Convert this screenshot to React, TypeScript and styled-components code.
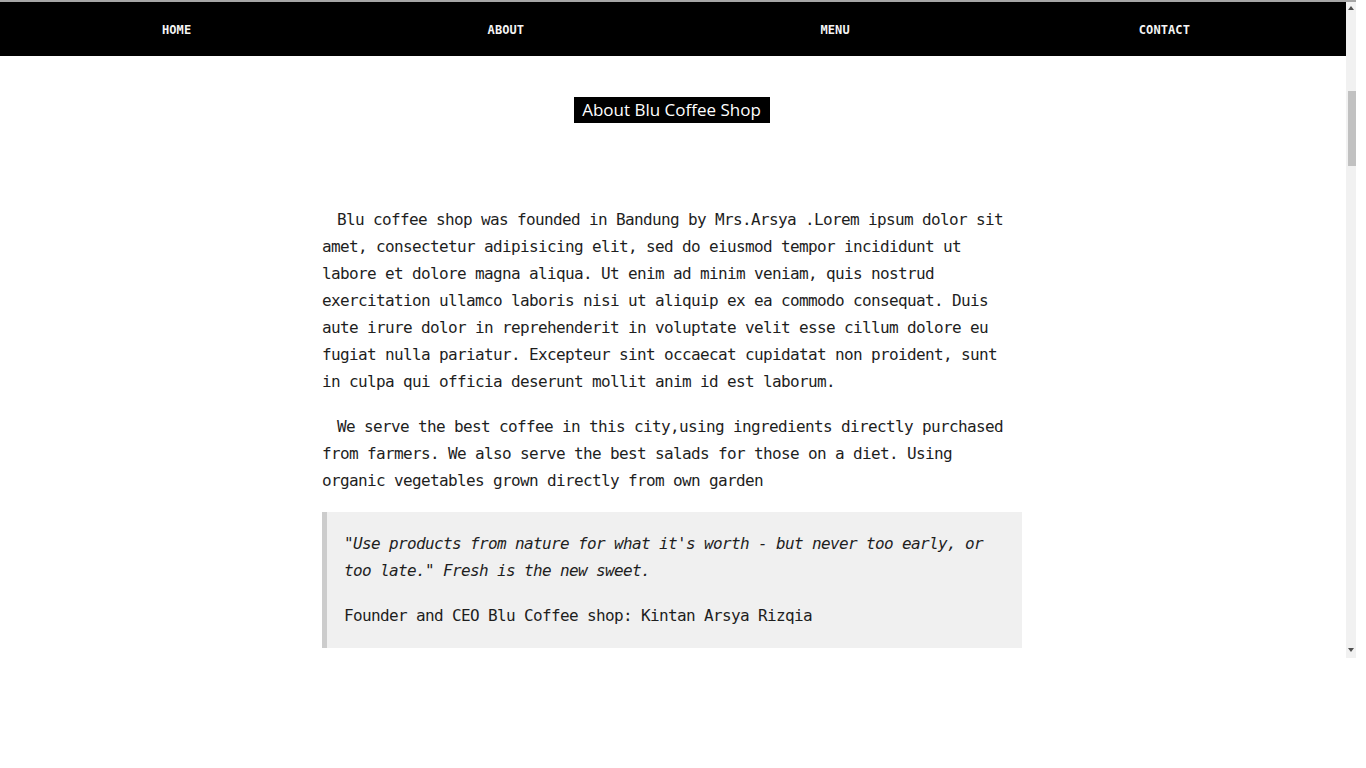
import React from "react";
import styled, { createGlobalStyle } from "styled-components";

const Global = createGlobalStyle`
  html, body { margin: 0; padding: 0; background: #fff; }
  body { font-family: "DejaVu Sans Mono", monospace; }
`;

const Frame = styled.div`
  display: flex;
  width: 1356px;
  height: 658px;
  border-top: 2px solid #a6a6a6;
  box-sizing: border-box;
`;

const Viewport = styled.div`
  width: 1346px;
  flex: none;
  overflow: hidden;
  background: #fff;
`;

const Track = styled.div`
  width: 10px;
  flex: none;
  background: #f1f1f1;
  display: flex;
  flex-direction: column;
  align-items: center;
`;

const Arrow = styled.div<{ $down?: boolean }>`
  width: 0;
  height: 0;
  margin-top: ${(p) => (p.$down ? "auto" : "4px")};
  margin-bottom: ${(p) => (p.$down ? "6px" : "0")};
  border-left: 3px solid transparent;
  border-right: 3px solid transparent;
  ${(p) =>
    p.$down
      ? "border-top: 4px solid #505050;"
      : "border-bottom: 4px solid #505050;"}
`;

const Thumb = styled.div`
  width: 8px;
  height: 75px;
  margin-top: 81px;
  margin-left: 2px;
  background: #c1c1c1;
`;

const Nav = styled.nav`
  background: #000;
  height: 54px;
  display: grid;
  grid-template-columns: repeat(4, 1fr);
  align-items: center;
  padding: 0 17px 0 12px;
  box-sizing: border-box;
`;

const NavLink = styled.a`
  color: #f4f4f4;
  text-align: center;
  font-family: "DejaVu Sans Mono", monospace;
  font-weight: bold;
  font-size: 12px;
  letter-spacing: 0.1px;
  text-decoration: none;
  padding-top: 2px;
`;

const Main = styled.main`
  width: 700px;
  margin: 0 auto;
  padding-top: 42px;
  transform: translateX(-1px);
`;

const TitleRow = styled.div`
  display: flex;
  justify-content: center;
  margin-bottom: 82px;
`;

const Title = styled.h1`
  margin: 0;
  background: #000;
  color: #fff;
  font-family: "Open Sans", sans-serif;
  font-weight: 400;
  font-size: 17px;
  line-height: 26px;
  padding: 0 9px 0 8px;
  transform: translateY(-1px);
`;

const Para = styled.p<{ $italic?: boolean }>`
  margin: 0 0 18px;
  font-family: "DejaVu Sans Mono", monospace;
  font-size: 16px;
  letter-spacing: -0.633px;
  line-height: 27px;
  color: #1e1e1e;
  font-style: ${(p) => (p.$italic ? "italic" : "normal")};
  &:last-child { margin-bottom: 0; }
`;

const Lead = styled(Para)`
  text-indent: 15px;
`;

const Quote = styled.blockquote`
  margin: 0;
  background: #f0f0f0;
  border-left: 5px solid #ccc;
  padding: 18px 20px 19px 17px;
`;

export default function App() {
  return (
    <>
      <Global />
      <Frame>
        <Viewport>
          <Nav>
            <NavLink href="#">HOME</NavLink>
            <NavLink href="#">ABOUT</NavLink>
            <NavLink href="#">MENU</NavLink>
            <NavLink href="#">CONTACT</NavLink>
          </Nav>
          <Main>
            <TitleRow>
              <Title>About Blu Coffee Shop</Title>
            </TitleRow>
            <Lead>
              Blu coffee shop was founded in Bandung by Mrs.Arsya .Lorem ipsum dolor sit amet, consectetur adipisicing elit, sed do eiusmod tempor incididunt ut labore et dolore magna aliqua. Ut enim ad minim veniam, quis nostrud exercitation ullamco laboris nisi ut aliquip ex ea commodo consequat. Duis aute irure dolor in reprehenderit in voluptate velit esse cillum dolore eu fugiat nulla pariatur. Excepteur sint occaecat cupidatat non proident, sunt in culpa qui officia deserunt mollit anim id est laborum.
            </Lead>
            <Lead>
              We serve the best coffee in this city,using ingredients directly purchased from farmers. We also serve the best salads for those on a diet. Using organic vegetables grown directly from own garden
            </Lead>
            <Quote>
              <Para $italic>
                "Use products from nature for what it's worth - but never too early, or too late." Fresh is the new sweet.
              </Para>
              <Para>Founder and CEO Blu Coffee shop: Kintan Arsya Rizqia</Para>
            </Quote>
          </Main>
        </Viewport>
        <Track>
          <Arrow />
          <Thumb />
          <Arrow $down />
        </Track>
      </Frame>
    </>
  );
}
